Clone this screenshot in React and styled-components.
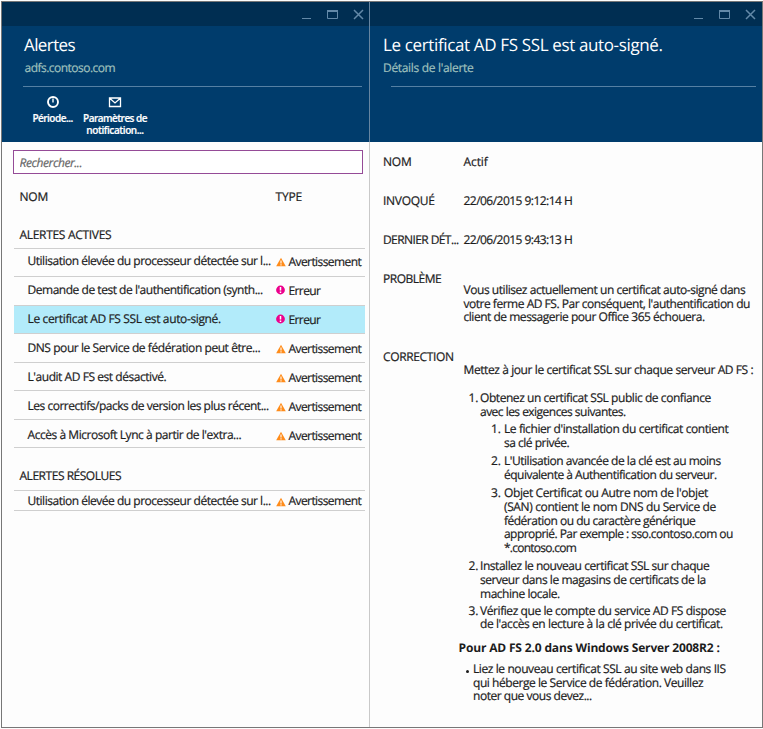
import React from "react";
import styled, { createGlobalStyle, css } from "styled-components";

const GlobalStyle = createGlobalStyle`
  * { box-sizing: border-box; }
  body { margin: 0; background: #fdfdfd; }
  body, input {
    font-family: "Open Sans", "Noto Sans", sans-serif;
    font-size: 12px;
    color: #1c1c1c;
    text-rendering: geometricPrecision;
    -webkit-text-stroke: 0.2px;
  }
  ol, ul, dl, dd, h1, h2, p { margin: 0; padding: 0; list-style: none; font-weight: 400; }
`;

const Portal = styled.main`
  display: grid;
  grid-template-columns: 368px 1fr;
  width: 762px;
  height: 727px;
  margin: 1px 0 0 1px;
  border: 1px solid #777;
  overflow: hidden;
`;

const Blade = styled.section`
  display: flex;
  flex-direction: column;
  min-width: 0;
  & + & { box-shadow: -1px 0 0 #c9c9c9; }
`;

const Divider = css`
  box-shadow: ${(p) => (p.$divided ? "-1px 0 0 #6585a1" : "none")};
`;

const TitleBar = styled.div`
  ${Divider}
  height: 24px;
  display: flex;
  justify-content: flex-end;
  align-items: center;
  gap: 13px;
  padding: 0 5px 0 0;
  background: #002e52;
`;

const WindowIcon = styled.svg`
  width: 13px;
  height: 13px;
  fill: none;
  stroke: #6389a8;
`;

const Header = styled.header`
  ${Divider}
  height: 116px;
  background: #003c6c;
  color: #fff;
`;

const Title = styled.h1`
  padding: 6px 0 0 ${(p) => (p.$divided ? 13 : 22)}px;
  font-size: 17px;
  line-height: 26px;
  white-space: nowrap;
  -webkit-text-stroke: 0;
`;

const Subtitle = styled.p`
  padding-left: ${(p) => (p.$divided ? 13 : 22.5)}px;
  line-height: 20px;
  color: #9fc0bd;
`;

const Rule = styled.div`
  height: 1px;
  margin: 8px ${(p) => (p.$divided ? "6px 0 21px" : "8px 0 21px")};
  background: #5580a3;
`;

const Commands = styled.nav`
  display: flex;
  gap: 2px;
  padding: 9px 0 0 25px;
`;

const Command = styled.button`
  display: flex;
  flex-direction: column;
  align-items: center;
  width: ${(p) => p.$w}px;
  padding: 0;
  border: 0;
  background: none;
  color: #fff;
  font: 600 10px/12px "Open Sans", "Noto Sans", sans-serif;
  svg { width: 14px; height: 12px; margin-bottom: 4px; fill: none; stroke: #fff; }
`;

const Line = styled.span`
  display: block;
  white-space: nowrap;
  letter-spacing: ${(p) => p.$ls}px;
`;

const Search = styled.input`
  width: 350px;
  height: 24px;
  margin: 8px 0 0 11px;
  padding: 0 6px 0 5.5px;
  border: 1px solid #954b97;
  background: #fff;
  font-style: italic;
  letter-spacing: -0.42px;
  outline: 0;
  &::placeholder { color: #666; opacity: 1; }
`;

const ColumnHeads = styled.div`
  display: grid;
  grid-template-columns: 256px 1fr;
  padding: 15px 0 0 17.5px;
  line-height: 16px;
`;

const GroupTitle = styled.h2`
  padding: ${(p) => p.$top}px 0 ${(p) => p.$bottom}px 17.5px;
  font-size: 12px;
  line-height: 16px;
`;

const AlertList = styled.ul`
  width: 351px;
  margin-left: 12px;
  border-top: 1px solid #cfcfcf;
`;

const AlertRow = styled.li`
  display: grid;
  grid-template-columns: 248.5px 12.5px 1fr;
  height: ${(p) => p.$h}px;
  padding: ${(p) => p.$pad}px 0 0 13.5px;
  border-bottom: 1px solid #cfcfcf;
  line-height: 16px;
  background: ${(p) => (p.$selected ? "#b2ebfa" : "transparent")};
`;

const TypeIcon = styled.svg`
  width: 10px;
  height: 10px;
  margin-top: ${(p) => p.$drop}px;
`;

const TypeLabel = styled(Line)`
  padding-top: ${(p) => p.$drop}px;
`;

const Details = styled.dl`
  display: grid;
  grid-template-columns: 80.5px 1fr;
  grid-template-rows: 39px 39px 39px 78px auto;
  padding: 12px 0 0 13px;
  line-height: 16px;
`;

const Copy = styled.dd`
  padding-top: ${(p) => p.$top || 0}px;
  line-height: ${(p) => (p.$top ? "13.6px" : "16px")};
`;

const Steps = styled.ol`
  padding-left: ${(p) => p.$indent}px;
  margin-top: ${(p) => p.$top}px;
`;

const Step = styled.li`
  display: grid;
  grid-template-columns: ${(p) => p.$marker}px 1fr;
  margin-top: ${(p) => p.$gap || 0}px;
`;

const Bullet = styled.i`
  width: 3px;
  height: 3px;
  margin-top: 8px;
  border-radius: 50%;
  background: #1c1c1c;
`;

const Strong = styled.p`
  margin: 10px 0 0 -5px;
  font-weight: 700;
  -webkit-text-stroke: 0;
`;

function WindowControls({ divided }) {
  return (
    <TitleBar $divided={divided}>
      <WindowIcon viewBox="0 0 13 13"><path d="M2 10.5h9" /></WindowIcon>
      <WindowIcon viewBox="0 0 13 13"><path d="M1.5 3v7.5h10V3M1 2.5h11M1 3.5h11" /></WindowIcon>
      <WindowIcon viewBox="0 0 13 13"><path d="M2 2l9 9M11 2l-9 9" strokeWidth="1.5" /></WindowIcon>
    </TitleBar>
  );
}

function BladeHeader({ divided, title, titleLs, subtitle, subtitleLs, children }) {
  return (
    <>
      <WindowControls divided={divided} />
      <Header $divided={divided}>
        <Title $divided={divided}><Line $ls={titleLs}>{title}</Line></Title>
        <Subtitle $divided={divided}><Line $ls={subtitleLs}>{subtitle}</Line></Subtitle>
        <Rule $divided={divided} />
        {children}
      </Header>
    </>
  );
}

function WarningIcon() {
  return (
    <TypeIcon $drop={3.5} viewBox="0 0 10 10">
      <path d="M5 .8L9.8 9.2H.2z" fill="#ff8c1a" />
      <path d="M5 3.4v3M5 7.2v1.2" stroke="#fff" strokeWidth="1.1" />
    </TypeIcon>
  );
}

function ErrorIcon() {
  return (
    <TypeIcon $drop={2.5} viewBox="0 0 10 10">
      <circle cx="4.5" cy="5" r="4.4" fill="#ec008c" />
      <path d="M4.5 2v3.6M4.5 6.5v1.5" stroke="#fff" strokeWidth="1.5" />
    </TypeIcon>
  );
}

const active = [
  { name: "Utilisation élevée du processeur détectée sur l...", ls: -0.481, h: 28, pad: 4 },
  { name: "Demande de test de l'authentification (synth...", ls: -0.469, error: true, h: 29, pad: 5 },
  { name: "Le certificat AD FS SSL est auto-signé.", ls: -0.359, error: true, selected: true, h: 28, pad: 5 },
  { name: "DNS pour le Service de fédération peut être...", ls: -0.434, h: 29, pad: 6 },
  { name: "L'audit AD FS est désactivé.", ls: -0.448, h: 28, pad: 6 },
  { name: "Les correctifs/packs de version les plus récent...", ls: -0.479, h: 29, pad: 7 },
  { name: "Accès à Microsoft Lync à partir de l'extra...", ls: -0.456, h: 28, pad: 7 },
];

function Alert({ item, drop = 1 }) {
  return (
    <AlertRow $h={item.h} $pad={item.pad} $selected={item.selected}>
      <Line $ls={item.ls}>{item.name}</Line>
      {item.error ? <ErrorIcon /> : <WarningIcon />}
      <TypeLabel $drop={drop} $ls={item.error ? -0.6 : -0.576}>{item.error ? "Erreur" : "Avertissement"}</TypeLabel>
    </AlertRow>
  );
}

function Item({ marker, width, gap, lines, children }) {
  return (
    <Step $marker={width} $gap={gap}>
      {marker ? <span>{marker}</span> : <Bullet />}
      <div>
        {lines.map(([text, ls]) => <Line key={text} $ls={ls}>{text}</Line>)}
        {children}
      </div>
    </Step>
  );
}

export default function App() {
  return (
    <Portal>
      <GlobalStyle />
      <Blade>
        <BladeHeader title="Alertes" titleLs={-0.6} subtitle="adfs.contoso.com" subtitleLs={-0.52}>
          <Commands>
            <Command $w={51}>
              <svg viewBox="0 0 14 12"><circle cx="7" cy="6" r="5" strokeWidth="1.9" /><path d="M7 2.5V6.5" strokeWidth="1.4" /></svg>
              <Line $ls={-0.509}>Période...</Line>
            </Command>
            <Command $w={70}>
              <svg viewBox="0 0 14 12"><path d="M1.5 2h11v8.5h-11zM2 2.5l5 4.5 5-4.5" strokeWidth="1.3" /></svg>
              <Line $ls={-0.54}>Paramètres de</Line>
              <Line $ls={-0.432}>notification...</Line>
            </Command>
          </Commands>
        </BladeHeader>
        <Search placeholder="Rechercher..." />
        <ColumnHeads><Line $ls={-0.2}>NOM</Line><Line $ls={-0.179}>TYPE</Line></ColumnHeads>
        <GroupTitle $top={22} $bottom={5}><Line $ls={-0.309}>ALERTES ACTIVES</Line></GroupTitle>
        <AlertList>{active.map((item) => <Alert key={item.name} item={item} />)}</AlertList>
        <GroupTitle $top={20} $bottom={6}><Line $ls={-0.471}>ALERTES RÉSOLUES</Line></GroupTitle>
        <AlertList><Alert item={{ ...active[0], h: 20, pad: 2 }} drop={0} /></AlertList>
      </Blade>
      <Blade>
        <BladeHeader divided title="Le certificat AD FS SSL est auto-signé." titleLs={-0.36} subtitle="Détails de l'alerte" subtitleLs={-0.32} />
        <Details>
          <dt><Line $ls={-0.2}>NOM</Line></dt>
          <Copy><Line $ls={-0.1}>Actif</Line></Copy>
          <dt><Line $ls={-0.3}>INVOQUÉ</Line></dt>
          <Copy><Line $ls={-0.528}>22/06/2015 9:12:14 H</Line></Copy>
          <dt><Line $ls={-0.588}>DERNIER DÉT...</Line></dt>
          <Copy><Line $ls={-0.528}>22/06/2015 9:43:13 H</Line></Copy>
          <dt><Line $ls={-0.491}>PROBLÈME</Line></dt>
          <Copy $top={12}>
            <Line $ls={-0.451}>Vous utilisez actuellement un certificat auto-signé dans</Line>
            <Line $ls={-0.48}>votre ferme AD FS. Par conséquent, l'authentification du</Line>
            <Line $ls={-0.476}>client de messagerie pour Office 365 échouera.</Line>
          </Copy>
          <dt><Line $ls={-0.35}>CORRECTION</Line></dt>
          <Copy $top={14}>
            <Line $ls={-0.407}>Mettez à jour le certificat SSL sur chaque serveur AD FS :</Line>
            <Steps $indent={5} $top={14.4}>
              <Item marker="1." width={11.5} lines={[["Obtenez un certificat SSL public de confiance", -0.439], ["avec les exigences suivantes.", -0.526]]}>
                <Steps $indent={11} $top={3.8}>
                  <Item marker="1." width={13} lines={[["Le fichier d'installation du certificat contient", -0.414], ["sa clé privée.", -0.491]]} />
                  <Item marker="2." width={13} gap={5.3} lines={[["L'Utilisation avancée de la clé est au moins", -0.472], ["équivalente à Authentification du serveur.", -0.508]]} />
                  <Item marker="3." width={13} gap={4.8} lines={[["Objet Certificat ou Autre nom de l'objet", -0.382], ["(SAN) contient le nom DNS du Service de", -0.373], ["fédération ou du caractère générique", -0.498], ["approprié. Par exemple : sso.contoso.com ou", -0.551], ["*.contoso.com", -0.75]]} />
                </Steps>
              </Item>
              <Item marker="2." width={11.5} gap={5} lines={[["Installez le nouveau certificat SSL sur chaque", -0.451], ["serveur dans le magasins de certificats de la", -0.447], ["machine locale.", -0.469]]} />
              <Item marker="3." width={11.5} gap={3.5} lines={[["Vérifiez que le compte du service AD FS dispose", -0.421], ["de l'accès en lecture à la clé privée du certificat.", -0.414]]} />
            </Steps>
            <Strong><Line $ls={-0.157}>Pour AD FS 2.0 dans Windows Server 2008R2 :</Line></Strong>
            <Steps as="ul" $indent={2.5} $top={7.5}>
              <Item width={7} lines={[["Liez le nouveau certificat SSL au site web dans IIS", -0.41], ["qui héberge le Service de fédération. Veuillez", -0.442], ["noter que vous devez...", -0.469]]} />
            </Steps>
          </Copy>
        </Details>
      </Blade>
    </Portal>
  );
}
